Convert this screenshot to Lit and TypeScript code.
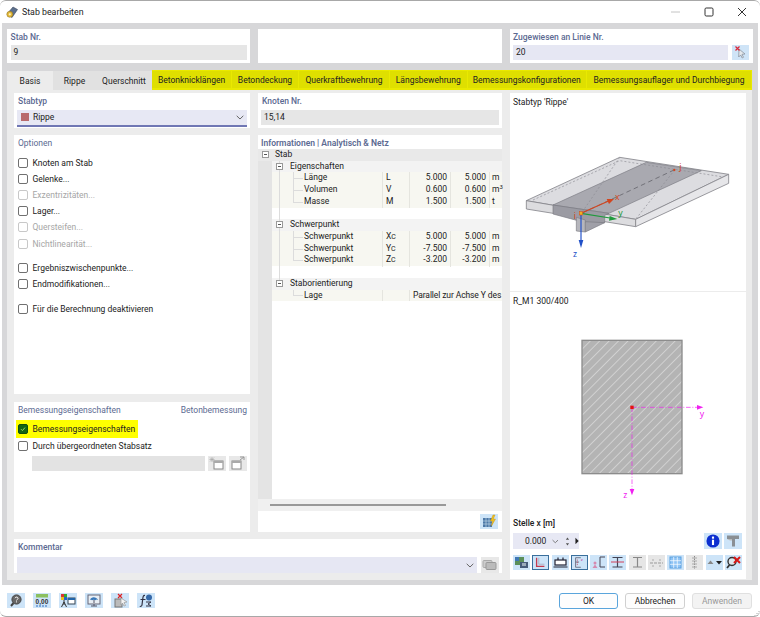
import { LitElement, css, html } from 'lit';
import { customElement } from 'lit/decorators.js';

type Row = {
  kind: 'blank' | 'group' | 'leaf';
  name?: string;
  sym?: string;
  sub?: string;
  a?: string;
  b?: string;
  unit?: string;
  sup?: string;
  long?: string;
  last?: boolean;
  lastGroup?: boolean;
};

const ROWS: Row[] = [
  { kind: 'group', name: 'Eigenschaften' },
  { kind: 'leaf', name: 'Länge', sym: 'L', a: '5.000', b: '5.000', unit: 'm' },
  { kind: 'leaf', name: 'Volumen', sym: 'V', a: '0.600', b: '0.600', unit: 'm', sup: '3' },
  { kind: 'leaf', name: 'Masse', sym: 'M', a: '1.500', b: '1.500', unit: 't', last: true },
  { kind: 'blank' },
  { kind: 'group', name: 'Schwerpunkt' },
  { kind: 'leaf', name: 'Schwerpunkt', sym: 'X', sub: 'C', a: '5.000', b: '5.000', unit: 'm' },
  { kind: 'leaf', name: 'Schwerpunkt', sym: 'Y', sub: 'C', a: '-7.500', b: '-7.500', unit: 'm' },
  { kind: 'leaf', name: 'Schwerpunkt', sym: 'Z', sub: 'C', a: '-3.200', b: '-3.200', unit: 'm', last: true },
  { kind: 'blank' },
  { kind: 'group', name: 'Staborientierung', lastGroup: true },
  { kind: 'leaf', name: 'Lage', long: 'Parallel zur Achse Y des', last: true, lastGroup: true },
];

const OPTIONS = [
  { label: 'Knoten am Stab' },
  { label: 'Gelenke...' },
  { label: 'Exzentrizitäten...', off: true },
  { label: 'Lager...' },
  { label: 'Quersteifen...', off: true },
  { label: 'Nichtlinearität...', off: true },
  { label: 'Ergebniszwischenpunkte...', gap: true },
  { label: 'Endmodifikationen...' },
  { label: 'Für die Berechnung deaktivieren', gap: true },
];

const YELLOW_TABS = [
  { label: 'Betonknicklängen', w: 80 },
  { label: 'Betondeckung', w: 67 },
  { label: 'Querkraftbewehrung', w: 91 },
  { label: 'Längsbewehrung', w: 77.5 },
  { label: 'Bemessungskonfigurationen', w: 119.5 },
  { label: 'Bemessungsauflager und Durchbiegung', w: 165 },
];

const chevron = html`<svg class="chev" viewBox="0 0 8 5"><path d="M.7.8 4 4 7.3.8" fill="none" stroke="#666" stroke-width="1"/></svg>`;

const FOOT_ICONS = [
  html`<svg viewBox="0 0 18 15"><circle cx="9.5" cy="6.5" r="4.6" fill="#666" stroke="#444"/><path d="M6.5 10 4 13" stroke="#444" stroke-width="2"/><path d="M8 5.2c.4-1.6 3.2-1.4 3 .3-.1 1-1.4 1-1.5 2M9.5 8.4v1" stroke="#fff" fill="none"/></svg>`,
  html`<svg viewBox="0 0 18 15"><rect x="3" y="1" width="12" height="3.5" fill="#8cc060"/><text x="2.6" y="11" font-size="6.5" font-weight="700" fill="#333" font-family="Liberation Sans">0,00</text><path d="M3 13h12" stroke="#2f6fc0" stroke-dasharray="2 1"/></svg>`,
  html`<svg viewBox="0 0 18 15"><rect x="2" y="1" width="3" height="3" fill="#d33"/><rect x="5" y="1" width="3" height="3" fill="#3a3"/><rect x="2" y="4" width="3" height="3" fill="#e8c020"/><rect x="5" y="4" width="3" height="3" fill="#26c"/><path d="M5 7v5M2.500 14 5 9l2.500 5" stroke="#333" fill="none"/><rect x="9" y="5" width="7" height="6" fill="#fff" stroke="#345"/><rect x="9" y="5" width="7" height="2" fill="#26a"/></svg>`,
  html`<svg viewBox="0 0 18 15"><rect x="3" y="2" width="12" height="9" fill="#e8eef4" stroke="#667"/><path d="M5 7c1-3.500 6-4 8 0-2-1-2-.5-2.500.2C9.500 6.500 8 6.500 7 7.200 6.500 6.500 6 6.500 5 7z" fill="#3a78b8"/><path d="M9 7v3M6 13h6M9 11v2" stroke="#556"/></svg>`,
  html`<svg viewBox="0 0 18 15"><rect x="4" y="6" width="7" height="8" fill="#bbb" stroke="#777"/><path d="M7 1l4 4M11 1 7 5" stroke="#d22" stroke-width="1.200"/><path d="M10 5l6 4-3 .5 1.500 3-1.500.5-1.500-3-1.500 2z" fill="#f4f4f4" stroke="#999" stroke-width=".7"/></svg>`,
  html`<svg viewBox="0 0 18 15"><path d="M8 2.500C6 2 6 4 5.600 7L5 12c-.3 1.600-1.800 1.500-2 1M3.500 6.500h5" stroke="#334" stroke-width="1.200" fill="none"/><circle cx="12" cy="4.500" r="3" fill="#3568a8"/><path d="M9 9h5l-3 2 3 2H9" stroke="#334" fill="none"/></svg>`,
];

const TOOL_ICONS = [
  html`<svg viewBox="0 0 17 15"><rect x="2" y="2" width="9" height="8" fill="#5b8f5a"/><rect x="2" y="2" width="4" height="4" fill="#3f77b5"/><rect x="7" y="7" width="8" height="6" fill="#445a7a"/><rect x="9" y="8" width="4" height="3" fill="#9ab"/></svg>`,
  html`<svg viewBox="0 0 17 15"><path d="M4 2v10h9" fill="none" stroke="#c43a4e" stroke-width="1.500"/><path d="M6.500 2v7.500H13" fill="none" stroke="#99a" stroke-width=".7"/></svg>`,
  html`<svg viewBox="0 0 17 15"><rect x="3" y="5" width="11" height="5" fill="#fff" stroke="#223" stroke-width="1.200"/><path d="M6 5V2.500M11 5V2.500M1.500 12h14" stroke="#223" stroke-width="1.200"/></svg>`,
  html`<svg viewBox="0 0 17 15"><path d="M4 2h6M4 2v11h6M4 7h4" fill="none" stroke="#667" stroke-width="1"/><path d="M6 4v7" stroke="#c43a4e" stroke-width=".8" stroke-dasharray="1.500 1"/><text x="10" y="6" font-size="5" fill="#c43a9e" font-family="Liberation Sans">z</text></svg>`,
  html`<svg viewBox="0 0 17 15"><path d="M15 2H10v10h5" fill="none" stroke="#445" stroke-width="1"/><circle cx="5" cy="8" r="1.500" fill="#d58ab0"/><path d="M2.500 13 5 9.500 7.500 13z" fill="#d58ab0"/></svg>`,
  html`<svg viewBox="0 0 17 15"><path d="M3.500 2.500h10M3.500 12h10M8.500 2.500V12" stroke="#445" stroke-width="1.200"/><path d="M2 7h13" stroke="#d0405a" stroke-width="1"/></svg>`,
  html`<svg viewBox="0 0 17 15"><path d="M4 2.500h9M4 12h9M8.500 2.500V12" stroke="#888" stroke-width="1.200"/></svg>`,
  html`<svg viewBox="0 0 17 15"><path d="M2 8h13" stroke="#999" stroke-dasharray="3 1"/><path d="M5 4v2M12 4v2M5 10v2M12 10v2" stroke="#aaa"/></svg>`,
  html`<svg viewBox="0 0 17 15"><rect x="3" y="2" width="11" height="11" fill="#8fc4f5" stroke="#5aa0e0"/><path d="M6.700 2v11M10.300 2v11M3 5.700h11M3 9.300h11" stroke="#fff" stroke-width=".7"/></svg>`,
  html`<svg viewBox="0 0 17 15"><path d="M8.500 1v13" stroke="#888" stroke-dasharray="1.500 1" stroke-width="1"/><path d="M6 3h5M6 6h5M6 9h5M6 12h5" stroke="#aaa"/></svg>`,
  html`<svg viewBox="0 0 17 15"><path d="M1.500 9 4.500 5.500 7.500 9z" fill="#888"/><path d="M10 6h6l-3 3.500z" fill="#222"/></svg>`,
  html`<svg viewBox="0 0 17 15"><circle cx="7" cy="6.500" r="4" fill="#dfe6ec" stroke="#333" stroke-width="1.400"/><path d="M4.500 10 2 13" stroke="#333" stroke-width="1.800"/><path d="M9 2l6 6M15 2 9 8" stroke="#d81818" stroke-width="2"/></svg>`,
];

@customElement('app-root')
export class AppRoot extends LitElement {
  private check(label: string, off = false, on = false, gap = false) {
    return html`<label class="check ${off ? 'off' : ''} ${gap ? 'gap' : ''}">
      <span class="box ${on ? 'on' : ''}">
        ${on ? html`<svg viewBox="0 0 10 10"><path d="M2.500 5.200 4.300 7l3.200-3.800" fill="none" stroke="#9fdc6a" stroke-width="1.200"/></svg>` : ''}
      </span>${label}
    </label>`;
  }

  private row(r: Row) {
    if (r.kind === 'blank') return html`<div class="row blank"><i class="v1"></i></div>`;
    if (r.kind === 'group') {
      return html`<div class="row group">
        <i class="v1 ${r.lastGroup ? 'half' : ''}"></i>
        <span class="exp lvl2"></span><span class="gname">${r.name}</span>
      </div>`;
    }
    return html`<div class="row leaf">
      ${r.lastGroup ? '' : html`<i class="v1"></i>`}
      <i class="v2 ${r.last ? 'half' : ''}"></i><i class="h2"></i>
      <span class="c name">${r.name}</span>
      <span class="c sym">${r.sym}${r.sub ? html`<small>${r.sub}</small>` : ''}</span>
      ${r.long
        ? html`<span class="c long">${r.long}</span>`
        : html`<span class="c num">${r.a}</span><span class="c num">${r.b}</span>
            <span class="c unit">${r.unit}${r.sup ? html`<sup>${r.sup}</sup>` : ''}</span>`}
    </div>`;
  }

  render() {
    return html`
      <div class="window">
        <header class="title">
          <svg class="logo" viewBox="0 0 12 12">
            <path d="M1 8 7 1 11.500 3.500 6 11.500z" fill="#5c6f8c" stroke="#3c4a60" stroke-width=".6"/>
            <circle cx="3.800" cy="8.300" r="3" fill="#e2b93b" stroke="#8a6a18" stroke-width=".5"/>
            <circle cx="3.800" cy="8.300" r="1.100" fill="#fff3c0"/>
          </svg>
          <span>Stab bearbeiten</span>
          <span class="controls">
            <svg viewBox="0 0 10 10"><path d="M0 5h9" stroke="#c4c4c4"/></svg>
            <svg viewBox="0 0 10 10"><rect x="1" y="1" width="8" height="8" rx="1.200" fill="none" stroke="#333"/></svg>
            <svg viewBox="0 0 10 10"><path d="M1 1l8 8M9 1l-8 8" stroke="#333"/></svg>
          </span>
        </header>

        <div class="main">
          <div class="top">
            <section class="tp">
              <div class="lab">Stab Nr.</div>
              <div class="inp gray">9</div>
            </section>
            <section class="tp"></section>
            <section class="tp">
              <div class="lab">Zugewiesen an Linie Nr.</div>
              <div class="inline">
                <div class="inp lilac grow">20</div>
                <span class="pick">
                  <svg viewBox="0 0 17 15"><path d="M7 4l6 5-3 .3 1.500 3-1.300.7-1.500-3-2 2z" fill="#e4e8ec" stroke="#7f8a96" stroke-width=".7"/><path d="M3.500 1.500l4 4M7.500 1.500l-4 4" stroke="#d8283a" stroke-width="1.200"/></svg>
                </span>
              </div>
            </section>
          </div>

          <nav class="tabs">
            <span class="tab active" style="width:46px">Basis</span>
            <span class="tab" style="width:43px">Rippe</span>
            <span class="tab" style="width:56px">Querschnitt</span>
            <div class="yellow">
              ${YELLOW_TABS.map(t => html`<span class="ytab" style="width:${t.w}px">${t.label}</span>`)}
            </div>
          </nav>

          <div class="page">
            <div class="leftmid">
              <div class="cols">
                <div class="col">
                  <section class="pn stabtyp">
                    <div class="lab">Stabtyp</div>
                    <div class="select">
                      <span class="swatch"></span>Rippe ${chevron}
                    </div>
                  </section>
                  <section class="pn options">
                    <div class="lab plain">Optionen</div>
                    <div class="opts">
                      ${OPTIONS.map(o => this.check(o.label, o.off, false, o.gap))}
                    </div>
                  </section>
                  <section class="pn design">
                    <div class="lab split plain"><span>Bemessungseigenschaften</span><span>Betonbemessung</span></div>
                    <div class="hl">${this.check('Bemessungseigenschaften', false, true)}</div>
                    ${this.check('Durch übergeordneten Stabsatz')}
                    <div class="setrow">
                      <div class="setinp"></div>
                      <span class="gbtn"><svg viewBox="0 0 18 15"><rect x="6" y="5" width="9" height="8" fill="#fff" stroke="#888"/><rect x="6" y="5" width="9" height="2" fill="#aaa"/><path d="M4 1v5M1.500 3.500h5M2 1.500l4 4M6 1.500l-4 4" stroke="#aaa" stroke-width=".7"/></svg></span>
                      <span class="gbtn"><svg viewBox="0 0 18 15"><rect x="3" y="5" width="9" height="8" fill="#fff" stroke="#888"/><rect x="3" y="5" width="9" height="2" fill="#aaa"/><path d="M11 1h4v3M15 1l-4 3" stroke="#999" fill="none"/></svg></span>
                    </div>
                  </section>
                </div>

                <div class="col">
                  <section class="pn stabtyp">
                    <div class="lab">Knoten Nr.</div>
                    <div class="inp gray">15,14</div>
                  </section>
                  <section class="pn info">
                    <div class="lab infolab">Informationen | Analytisch &amp; Netz</div>
                    <div class="row stab"><span class="exp lvl1"></span><span>Stab</span></div>
                    <div class="tree">
                      <div class="gutter"></div>
                      <div class="rows">${ROWS.map(r => this.row(r))}</div>
                    </div>
                    <div class="hbar"><span class="thumb"></span></div>
                    <div class="infofoot">
                      <span class="tb">
                        <svg viewBox="0 0 18 15"><rect x="3" y="4" width="9" height="9" fill="#4b78a8"/><path d="M6 4v9M9 4v9M3 7h9M3 10h9" stroke="#cfe0ef" stroke-width=".6"/><path d="M13 1l-2.500 6h2l-1 5 4-7h-2.200l1.700-4z" fill="#f0c020" stroke="#c09010" stroke-width=".4"/></svg>
                      </span>
                    </div>
                  </section>
                </div>
              </div>

              <section class="pn comment">
                <div class="lab">Kommentar</div>
                <div class="inline">
                  <div class="inp lilac grow cmt">${chevron}</div>
                  <span class="gbtn white">
                    <svg viewBox="0 0 18 15"><rect x="2" y="3" width="9" height="7" rx="1" fill="#ccc" stroke="#aaa"/><rect x="5" y="5" width="10" height="7" rx="1" fill="#bbb" stroke="#999"/></svg>
                  </span>
                </div>
              </section>
            </div>

            <section class="view">
              <div class="upper">
                <div class="vlab">Stabtyp 'Rippe'</div>
                <svg class="iso" viewBox="6 0 708 486">
                  <polygon points="55,212 335,82 662,133 383,268" fill="#dcdce0" stroke="#85858c" stroke-width="2.500"/>
                  <polygon points="55,212 383,268 383,290 55,237" fill="#dcdcdf" stroke="#85858c" stroke-width="2.500"/>
                  <polygon points="383,268 662,133 662,160 383,290" fill="#e6e6e9" stroke="#85858c" stroke-width="2.500"/>
                  <polygon points="135,225 415,97 580,122 303,250" fill="#a9a9b0" stroke="#7c7c84" stroke-width="2"/>
                  <polygon points="135,225 303,250 290,256 290,278 232,278 135,252" fill="#9b9ba3" stroke="#7c7c84" stroke-width="2"/>
                  <polygon points="205,262 232,270 232,306 205,303" fill="#b6b6bc" stroke="#7c7c84" stroke-width="2"/>
                  <polygon points="232,275 290,278 232,306" fill="#a0a0a8" stroke="#7c7c84" stroke-width="2"/>
                  <path d="M75 210 335 92 640 140M335 82 220 250M500 120 385 265" fill="none" stroke="#8b8b92" stroke-width="2" stroke-dasharray="6 6"/>
                  <path d="M225 248 498 120" stroke="#66666e" stroke-width="2.500" stroke-dasharray="14 10"/>
                  <path d="M219 250 300 214" stroke="#d2451e" stroke-width="3.500"/>
                  <polygon points="318,207 296,207 303,222" fill="#d2451e"/>
                  <path d="M219 250 306 264" stroke="#1f9a3c" stroke-width="3.500"/>
                  <polygon points="328,267 305,258 303,272" fill="#1f9a3c"/>
                  <path d="M219 250V332" stroke="#2050c8" stroke-width="3.500"/>
                  <polygon points="219,354 212,330 226,330" fill="#2050c8"/>
                  <rect x="214" y="245" width="10" height="10" fill="#f0b020" stroke="#d2451e" stroke-width="1.500"/>
                  <circle cx="499" cy="120" r="3.500" fill="#d2451e"/>
                  <text x="321" y="211" class="axis" fill="#d2451e">x</text>
                  <text x="331" y="259" class="axis" fill="#1f9a3c">y</text>
                  <text x="195" y="380" class="axis" fill="#2050c8">z</text>
                  <text x="197" y="268" class="axis" fill="#d2451e">i</text>
                  <text x="514" y="120" class="axis" fill="#d2451e">j</text>
                </svg>
              </div>

              <div class="lower">
                <div class="vlab">R_M1 300/400</div>
                <svg class="sect" viewBox="6 18 708 612">
                  <defs>
                    <pattern id="hatch" width="20" height="20" patternUnits="userSpaceOnUse" patternTransform="rotate(45)">
                      <rect width="20" height="20" fill="#b4b4b4"/>
                      <path d="M0 0V20" stroke="#dedede" stroke-width="4"/>
                    </pattern>
                  </defs>
                  <rect x="222" y="121" width="300" height="400" fill="url(#hatch)" stroke="#8c8c8c" stroke-width="4"/>
                  <path d="M372 322H570" stroke="#f020f0" stroke-width="2" stroke-dasharray="14 5 3 5"/>
                  <path d="M372 322V570" stroke="#f020f0" stroke-width="2" stroke-dasharray="14 5 3 5"/>
                  <polygon points="586,322 567,315 567,329" fill="#f020f0"/>
                  <polygon points="372,586 365,567 379,567" fill="#f020f0"/>
                  <rect x="367" y="317" width="10" height="10" fill="#e81010"/>
                  <text x="575" y="352" class="axis" fill="#f020f0">y</text>
                  <text x="346" y="595" class="axis" fill="#f020f0">z</text>
                </svg>
              </div>

              <div class="tools">
                <div class="vlab dark">Stelle x [m]</div>
                <div class="toolrow">
                  <div class="spin">
                    <span class="val">0.000</span>${chevron}
                    <svg class="updown" viewBox="0 0 6 11"><path d="M3 .5 5 3.500H1zM3 10.500 1 7.500h4z" fill="#555"/></svg>
                    <svg class="play" viewBox="0 0 5 8"><path d="M.5 0v8L4.500 4z" fill="#222"/></svg>
                  </div>
                  <span class="spacer"></span>
                  <span class="tb wide"><svg viewBox="0 0 17 15"><circle cx="8.500" cy="7.500" r="6.200" fill="#0c2fd0"/><rect x="7.500" y="6.300" width="2" height="5" fill="#fff"/><rect x="7.500" y="3.300" width="2" height="2" fill="#fff"/></svg></span>
                  <span class="tb wide"><svg viewBox="0 0 18 15"><path d="M3 2h12v3.500H11V13H8V5.500H3z" fill="#8a8f94"/><path d="M3 5.500 6 7h2V5.500z" fill="#bbb"/></svg></span>
                </div>
                <div class="toolrow icons">
                  ${TOOL_ICONS.map((ic, i) => html`<span class="tb ${[1, 3].includes(i) ? 'sel' : ''} ${[6, 7, 9].includes(i) ? 'dis' : ''}">${ic}</span>`)}
                </div>
              </div>
            </section>
          </div>
        </div>

        <footer class="foot">
          <div class="ficons">${FOOT_ICONS.map(ic => html`<span class="tb">${ic}</span>`)}</div>
          <div class="btns">
            <button class="primary">OK</button>
            <button>Abbrechen</button>
            <button class="disabled">Anwenden</button>
          </div>
          <svg class="grip" viewBox="0 0 6 6"><path d="M5 1v1M3 3v1M5 3v1M1 5v1M3 5v1M5 5v1" stroke="#aaa"/></svg>
        </footer>
      </div>
    `;
  }

  static styles = css`
    :host {
      display: block;
      width: 760px;
      height: 617px;
      font-family: Roboto, 'Noto Sans', sans-serif;
      font-size: 8.500px;
      color: #222;
    }
    * { box-sizing: border-box; }
    svg { display: block; }

    .window {
      position: relative;
      width: 760px;
      height: 617px;
      background: #fff;
      border-top: 1px solid #a8a8a8;
      border-bottom: 1px solid #a8a8a8;
      border-radius: 6px;
      display: flex;
      flex-direction: column;
      overflow: hidden;
    }

    .title {
      height: 22px;
      flex: none;
      display: flex;
      align-items: center;
      padding: 0 0 0 6px;
      gap: 4px;
      font-size: 8.800px;
    }
    .logo { width: 12px; height: 12px; }
    .controls { margin-left: auto; display: flex; gap: 23px; padding-right: 13px; }
    .controls svg { width: 10px; height: 10px; }

    .main {
      flex: none;
      height: 562px;
      margin: 0 2px;
      padding: 6px 6px 0 5px;
      background: #d7d7d9;
      display: flex;
      flex-direction: column;
    }

    .top {
      display: grid;
      grid-template-columns: 243px 243.500px 243px;
      gap: 8px;
      height: 34px;
    }
    .tp { background: #fff; padding: 2px 3.500px; }

    .lab {
      height: 14px;
      line-height: 13px;
      color: #5c6a92;
      font-weight: 500;
    }
    .lab.plain { font-weight: 400; }
    .split { display: flex; justify-content: space-between; }
    .inp {
      height: 15px;
      line-height: 15px;
      padding-left: 3px;
    }
    .gray { background: #e6e6e6; }
    .lilac { background: #e6e7f3; }
    .inline { display: flex; gap: 4px; }
    .grow { flex: 1; }
    .pick {
      width: 17px;
      height: 15px;
      background: #cfe4f7;
    }

    .tabs {
      margin-top: 7px;
      height: 20px;
      display: flex;
      flex: none;
    }
    .tab {
      height: 19px;
      margin-top: 1px;
      background: #e1e1e1;
      display: flex;
      align-items: center;
      justify-content: center;
    }
    .tab.active { background: #ececec; }
    .yellow {
      flex: 1;
      display: flex;
      background: #e9e900;
      padding: 1px 0 2px 0;
    }
    .ytab {
      flex: none;
      background: #dfdf00;
      border-right: 1px solid #e9e900;
      display: flex;
      align-items: center;
      justify-content: center;
      white-space: nowrap;
    }

    .page {
      flex: 1;
      display: flex;
      gap: 8px;
      align-items: flex-start;
      padding: 3px 6px 0 7px;
      background: #ececec;
      margin-bottom: 5px;
    }
    .leftmid {
      width: 488px;
      display: flex;
      flex-direction: column;
      gap: 7px;
    }
    .cols {
      display: grid;
      grid-template-columns: 236px 244px;
      gap: 8px;
    }
    .col { display: flex; flex-direction: column; gap: 7px; }
    .pn { background: #fff; padding: 2px 3px 0; }
    .pn > .lab { padding-left: 1px; }
    .stabtyp { height: 35px; }
    .stabtyp .lab { margin-bottom: 1px; height: 14px; }

    .select {
      position: relative;
      height: 17px;
      display: flex;
      align-items: center;
      padding: 0 0 1px 4px;
      background: #e7e8f4;
      border-bottom: 2px solid #7077b4;
    }
    .swatch { width: 8px; height: 8px; background: #b96b6d; margin-right: 4px; }
    .chev { width: 8px; height: 5px; }
    .select .chev { margin-left: auto; margin-right: 3px; }

    .options { height: 259px; }
    .opts { padding-top: 3.500px; }
    .check {
      display: flex;
      align-items: center;
      height: 16.200px;
      gap: 5px;
      padding-left: .5px;
      white-space: nowrap;
    }
    .check.gap { margin-top: 8.500px; }
    .check.off { color: #a6a6a6; }
    .box {
      width: 10px;
      height: 10px;
      flex: none;
      border: 1px solid #707070;
      border-radius: 2px;
      background: #fff;
    }
    .off .box { border-color: #c8c8c8; }
    .box.on { background: #146414; border-color: #0e4e0e; }

    .design { height: 130px; margin-top: 1px; }
    .hl {
      background: #ffff00;
      margin: 2px 0 0 -1px;
      width: 122px;
      height: 18px;
      padding: 1px 0 0 1px;
    }
    .setrow {
      display: flex;
      gap: 3px;
      margin: 2px 0 0 15px;
    }
    .setinp { width: 173px; height: 15px; background: #e3e3e3; }
    .gbtn {
      width: 18px;
      height: 15px;
      background: #e8e8e8;
    }
    .gbtn.white { height: 16px; }

    .info {
      height: 397px;
      padding: 0;
      display: flex;
      flex-direction: column;
    }
    .infolab { padding: 2px 0 0 3px !important; font-weight: 600; }
    .row { position: relative; height: 11.720px; line-height: 11.720px; white-space: nowrap; }
    .stab { background: #e9e9e9; padding-left: 17px; flex: none; }
    .tree { flex: 1; display: flex; min-height: 0; }
    .gutter { width: 14px; background: #e4e4e4; }
    .rows { flex: 1; }
    .group { background: #f3f3f3; padding-left: 18px; }
    .gname { position: relative; }
    .leaf {
      display: grid;
      grid-template-columns: 110px 27px 41px 39px 13px;
      background: #f7f7f1;
    }
    .c { padding-left: 3px; border-left: 1px solid #e5e5df; }
    .name { border-left: 0; padding-left: 32px; }
    .num { text-align: right; padding: 0 3px 0 0; }
    .unit { padding-left: 2px; }
    .long { grid-column: 3 / span 3; padding-left: 3px; letter-spacing: -.1px; }
    small { font-size: 7px; }
    sup { font-size: 6px; line-height: 0; vertical-align: 3px; }
    .exp {
      position: absolute;
      width: 7px;
      height: 7px;
      top: 2px;
      background: linear-gradient(#555, #555) center / 3px 1px no-repeat #fff;
      border: 1px solid #999;
    }
    .lvl1 { left: 3.500px; }
    .lvl2 { left: 3.500px; z-index: 1; }
    .v1, .v2, .h2 { position: absolute; background: #dcdcdc; }
    .v1 { left: 7px; top: 0; bottom: 0; width: 1px; }
    .v1.half { bottom: 50%; }
    .v2 { left: 21px; top: 0; bottom: 0; width: 1px; }
    .v2.half { bottom: 50%; }
    .h2 { left: 21px; top: 50%; width: 10px; height: 1px; }
    .hbar {
      flex: none;
      height: 12px;
      background: #f0f0f0;
      display: flex;
      align-items: center;
      padding-left: 12px;
    }
    .thumb { width: 176px; height: 2px; background: #999; }
    .infofoot {
      flex: none;
      height: 21px;
      display: flex;
      align-items: center;
      justify-content: flex-end;
      padding-right: 4px;
    }

    .comment { height: 34px; }
    .comment .lab { margin-bottom: 2px; }
    .cmt {
      height: 16px;
      display: flex;
      align-items: center;
      justify-content: flex-end;
      padding-right: 3px;
    }

    .view {
      width: 236px;
      height: 486px;
      background: #fff;
      display: flex;
      flex-direction: column;
    }
    .upper { height: 199px; border-bottom: 1px solid #ececec; flex: none; }
    .vlab { padding: 2px 0 0 3px; height: 16px; line-height: 14px; }
    .upper .vlab { height: 37px; }
    .iso { width: 236px; height: 162px; overflow: hidden; }
    .lower .vlab { height: 14px; }
    .sect { width: 236px; height: 204px; }
    .axis { font-size: 26px; font-family: 'Noto Sans', sans-serif; }

    .tools {
      margin-top: auto;
      padding: 0 4px 9px 3px;
    }
    .tools .vlab { padding: 0; height: 16px; line-height: 12px; font-weight: 500; }
    .toolrow { display: flex; gap: 2px; align-items: center; }
    .toolrow.icons { margin-top: 6px; justify-content: space-between; gap: 0; }
    .spin {
      width: 66px;
      height: 16px;
      display: flex;
      align-items: center;
      background: #e7e8f4;
      padding-left: 12px;
    }
    .spin .chev { margin-left: 6px; }
    .updown { width: 6px; height: 11px; margin-left: 6px; }
    .play { width: 5px; height: 8px; margin-left: 5px; }
    .spacer { flex: 1; }
    .tb {
      display: block;
      width: 17px;
      height: 15px;
      background: #cde4f8;
      flex: none;
    }
    .tb svg, .gbtn svg, .pick svg { width: 100%; height: 100%; }
    .tb.wide { width: 18px; height: 16px; }
    .tb.sel { border: 1px solid #3a6f9c; }
    .tb.dis { background: #e6e6e6; }
    .infofoot .tb { width: 18px; }

    .foot {
      position: relative;
      flex: 1;
      display: flex;
      justify-content: space-between;
      padding: 8px 8px 0 7px;
    }
    .ficons { display: flex; gap: 8px; }
    .ficons .tb { width: 18px; }
    .btns { display: flex; gap: 7px; }
    button {
      width: 60px;
      height: 16px;
      padding: 0;
      background: #fdfdfd;
      border: 1px solid #d0d0d0;
      border-radius: 3px;
      font: inherit;
      color: #222;
    }
    button.primary { border: 1.500px solid #5aa5dc; width: 59px; }
    button.disabled { color: #999; background: #f3f3f3; border-color: #e0e0e0; }
    .grip { position: absolute; right: 0; bottom: 0; width: 6px; height: 6px; }
  `;
}

declare global {
  interface HTMLElementTagNameMap {
    'app-root': AppRoot;
  }
}
